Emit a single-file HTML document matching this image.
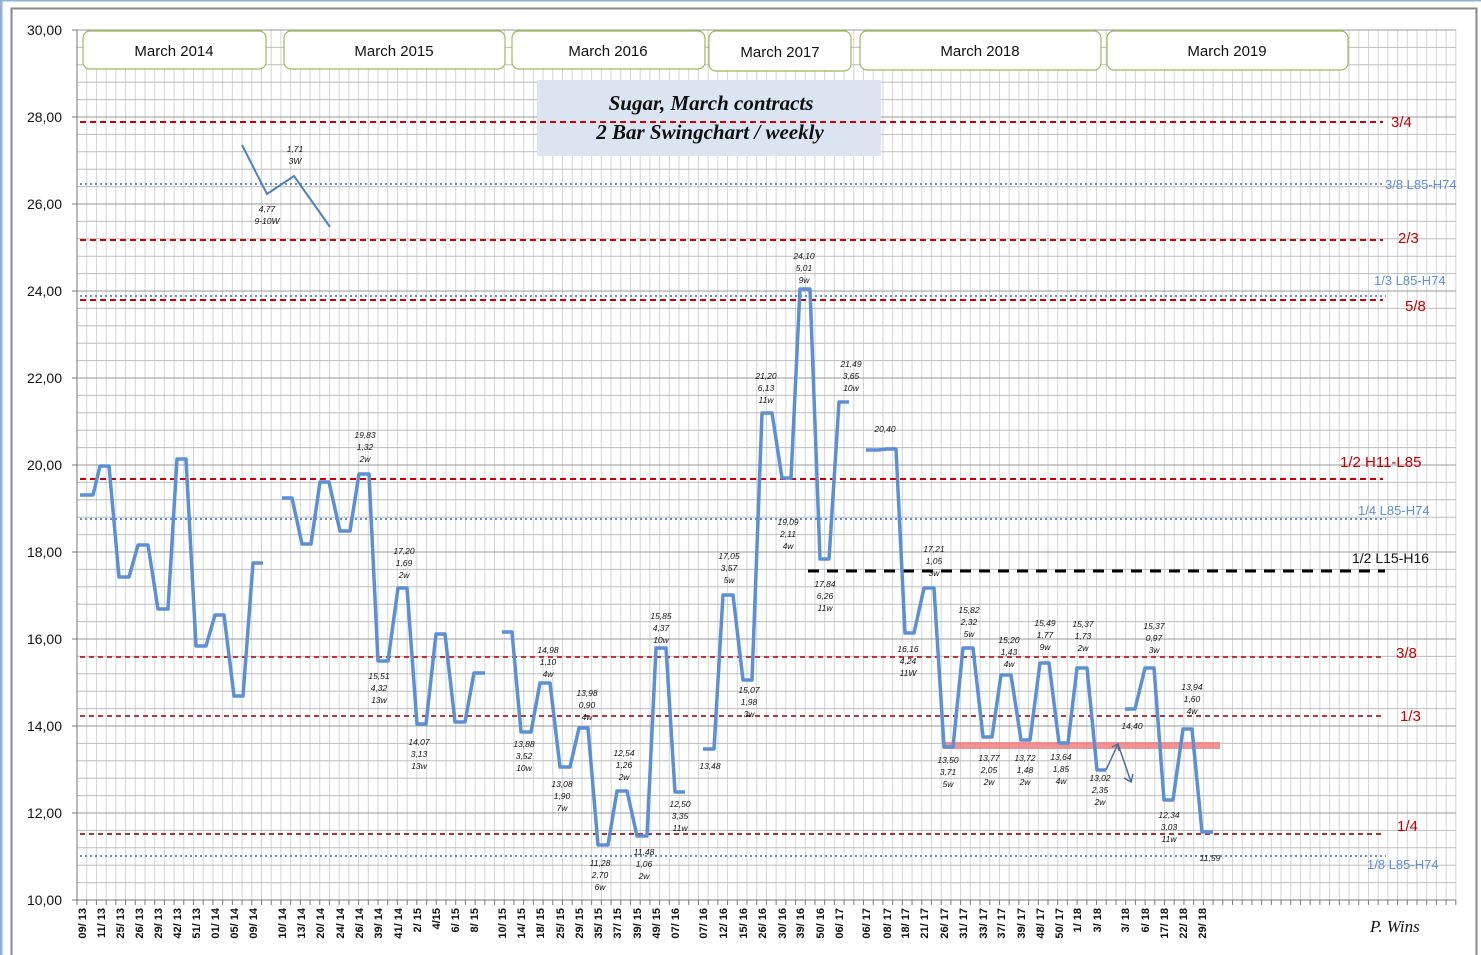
<!DOCTYPE html>
<html><head><meta charset="utf-8"><style>
html,body{margin:0;padding:0;background:#fff;width:1481px;height:955px;overflow:hidden}
svg{display:block}
.dl{font:italic 8.5px "Liberation Sans",sans-serif;fill:#111;text-anchor:middle}
.yl{font:14px "Liberation Sans",sans-serif;fill:#111;text-anchor:end}
.xl{font:bold 11px "Liberation Sans",sans-serif;fill:#111;text-anchor:end}
.mo{font:15px "Liberation Sans",sans-serif;fill:#111;text-anchor:middle}
.rl{font:15px "Liberation Sans",sans-serif;fill:#c00000}
.bl{font:13px "Liberation Sans",sans-serif;fill:#5b8fd6}
</style></head><body>
<svg id="s" width="1481" height="955" viewBox="0 0 1481 955" xmlns="http://www.w3.org/2000/svg">
<rect x="0" y="0" width="1481" height="955" fill="#fff"/>
<line x1="0" y1="0.5" x2="1481" y2="0.5" stroke="#8fb0d8" stroke-width="2"/>
<line x1="1" y1="0" x2="1" y2="955" stroke="#8fb0d8" stroke-width="3"/>
<rect x="11.5" y="8.5" width="1465" height="950" fill="#fff" stroke="#8a8a8a" stroke-width="2"/>
<g id="grid"></g>
<!-- axes -->
<line x1="77" y1="30" x2="77" y2="900" stroke="#777"/>
<line x1="77" y1="900" x2="1456" y2="900" stroke="#777"/>
<g id="ticks"></g>
<!-- y labels -->
<g class="yl">
<text x="62" y="35">30,00</text><text x="62" y="122">28,00</text><text x="62" y="209">26,00</text>
<text x="62" y="296">24,00</text><text x="62" y="383">22,00</text><text x="62" y="470">20,00</text>
<text x="62" y="557">18,00</text><text x="62" y="644">16,00</text><text x="62" y="731">14,00</text>
<text x="62" y="818">12,00</text><text x="62" y="905">10,00</text>
</g>
<!-- month boxes -->
<g fill="#fff" stroke="#9bbb59" stroke-width="1.2">
<rect x="83" y="31" width="183" height="38" rx="7"/>
<rect x="284" y="31" width="221" height="38" rx="7"/>
<rect x="512" y="31" width="193" height="38" rx="7"/>
<rect x="709" y="31" width="142" height="40" rx="7"/>
<rect x="860" y="31" width="241" height="39" rx="7"/>
<rect x="1107" y="31" width="241" height="39" rx="7"/>
</g>
<g class="mo">
<text x="174" y="56">March 2014</text><text x="394" y="56">March 2015</text>
<text x="608" y="56">March 2016</text><text x="780" y="57">March 2017</text>
<text x="980" y="56">March 2018</text><text x="1227" y="56">March 2019</text>
</g>
<!-- title -->
<rect x="537" y="80" width="344" height="76" fill="#dbe5f1"/>
<g style="font:bold italic 21px 'Liberation Serif',serif;fill:#111;text-anchor:middle">
<text x="711" y="110">Sugar, March contracts</text>
<text x="710" y="139">2 Bar Swingchart / weekly</text>
</g>
<!-- ref lines -->
<g fill="none" stroke-width="2">
<line x1="80" y1="122" x2="1383" y2="122" stroke="#cc0000" stroke-dasharray="6,4"/>
<line x1="80" y1="184" x2="1383" y2="184" stroke="#5b8fd6" stroke-dasharray="2,3"/>
<line x1="80" y1="240" x2="1383" y2="240" stroke="#cc0000" stroke-dasharray="6,4"/>
<line x1="80" y1="296" x2="1386" y2="296" stroke="#5b8fd6" stroke-dasharray="2,3"/>
<line x1="80" y1="300" x2="1383" y2="300" stroke="#cc0000" stroke-dasharray="6,4"/>
<line x1="80" y1="479" x2="1383" y2="479" stroke="#cc0000" stroke-dasharray="6,4"/>
<line x1="80" y1="519" x2="1386" y2="519" stroke="#5b8fd6" stroke-dasharray="2,3"/>
<line x1="808" y1="571" x2="1385" y2="571" stroke="#000" stroke-width="3" stroke-dasharray="11,8"/>
<line x1="80" y1="657" x2="1383" y2="657" stroke="#b23a3a" stroke-dasharray="5,4"/>
<line x1="80" y1="716" x2="1383" y2="716" stroke="#b23a3a" stroke-dasharray="5,4"/>
<line x1="80" y1="834" x2="1383" y2="834" stroke="#a83232" stroke-dasharray="5,4"/>
<line x1="80" y1="856" x2="1386" y2="856" stroke="#5b8fd6" stroke-dasharray="2,3"/>
</g>
<text class="rl" x="1391" y="127">3/4</text>
<text class="bl" x="1385" y="189">3/8 L85-H74</text>
<text class="rl" x="1398" y="243">2/3</text>
<text class="bl" x="1374" y="285">1/3 L85-H74</text>
<text class="rl" x="1405" y="311">5/8</text>
<text class="rl" x="1340" y="467">1/2 H11-L85</text>
<text class="bl" x="1358" y="515">1/4 L85-H74</text>
<text x="1352" y="563" style="font:14px 'Liberation Sans',sans-serif;fill:#111">1/2 L15-H16</text>
<text class="rl" x="1396" y="658">3/8</text>
<text class="rl" x="1400" y="721">1/3</text>
<text class="rl" x="1397" y="831">1/4</text>
<text class="bl" x="1367" y="869">1/8 L85-H74</text>
<!-- red bar -->
<rect x="943" y="742" width="277" height="7" fill="#f08080" opacity="0.85"/>
<!-- data -->
<g fill="none" stroke="#5b8fd6" stroke-width="3.5" stroke-linejoin="round">
<polyline points="80,495 93,495 100,466 109,466 119,577 129,577 138,545 148,545 158,609 168,609 177,459 186,459 196,646 206,646 215,615 224,615 234,696 243,696 253,563 263,563"/>
<polyline points="282,498 292,498 302,544 311,544 320,482 329,482 340,531 350,531 359,474 369,474 378,661 388,661 398,588 407,588 417,724 426,724 436,634 445,634 455,722 465,722 474,673 485,673"/>
<polyline points="502,632 512,632 521,732 531,732 540,683 550,683 560,767 570,767 579,728 588,728 598,845 608,845 617,791 627,791 637,836 647,836 656,648 666,648 675,792 685,792"/>
<polyline points="703,749 714,749 723,595 733,595 743,680 752,680 762,413 772,413 782,478 791,478 800,289 810,289 820,559 829,559 839,402 849,402"/>
<polyline points="866,450 878,450 887,449 896,449 905,633 914,633 924,588 934,588 944,747 953,747 963,648 973,648 983,737 992,737 1001,675 1011,675 1021,740 1030,740 1040,663 1049,663 1059,743 1068,743 1077,668 1087,668 1097,770 1106,770"/>
<polyline points="1125,709 1135,709 1145,668 1154,668 1164,800 1173,800 1183,729 1192,729 1202,832 1213,832"/>
</g>
<polyline points="242,145 267,194 294,176 330,227" fill="none" stroke="#4f81bd" stroke-width="2"/>
<g fill="none" stroke="#4a6fa5" stroke-width="1.5">
<polyline points="1106,770 1118,744 1131,782"/>
<polyline points="1112,747 1118,744 1119,751"/>
<polyline points="1124,778 1131,782 1133,774"/>
</g>
<!-- data labels -->
<g class="dl" id="dls"></g>
<text x="1370" y="932" style="font:italic 17px 'Liberation Serif',serif;fill:#111">P. Wins</text>
<g id="xls"></g>
</svg>
<script>
var NS="http://www.w3.org/2000/svg",g=document.getElementById('grid'),t=document.getElementById('ticks');
function el(p,n,a,txt){var e=document.createElementNS(NS,n);for(var k in a)e.setAttribute(k,a[k]);if(txt)e.textContent=txt;p.appendChild(e);return e;}
for(var x=77;x<=1456;x+=9.71){el(g,'line',{x1:x,y1:30,x2:x,y2:900,stroke:'#d4d4d4','stroke-width':1});el(t,'line',{x1:x,y1:900,x2:x,y2:905,stroke:'#777'});}
for(var i=0;i<=50;i++){var y=30+i*17.4;el(g,'line',{x1:77,y1:y,x2:1456,y2:y,stroke:(i%5==0)?'#999':'#bdbdbd','stroke-width':1});}
for(var i=0;i<=10;i++){var y=30+i*87;el(t,'line',{x1:72,y1:y,x2:77,y2:y,stroke:'#777'});}
var L=[["1,71|3W",295,152],["4,77|9-10W",267,212],["19,83|1,32|2w",365,438],["15,51|4,32|13w",379,679],["17,20|1,69|2w",404,554],["14,07|3,13|13w",419,745],["14,98|1,10|4w",548,653],["13,88|3,52|10w",524,747],["13,98|0,90|4w",587,696],["13,08|1,90|7w",562,787],["12,54|1,26|2w",624,756],["11,28|2,70|6w",600,866],["15,85|4,37|10w",661,619],["11,48|1,06|2w",644,855],["12,50|3,35|11w",680,807],["13,48",710,769],["17,05|3,57|5w",729,559],["15,07|1,98|3w",749,693],["21,20|6,13|11w",766,379],["19,09|2,11|4w",788,525],["24,10|5,01|9w",804,259],["17,84|6,26|11w",825,587],["21,49|3,65|10w",851,367],["20,40",885,432],["17,21|1,05|3w",934,552],["16,16|4,24|11W",908,652],["15,82|2,32|5w",969,613],["13,50|3,71|5w",948,763],["15,20|1,43|4w",1009,643],["13,77|2,05|2w",989,761],["15,49|1,77|9w",1045,626],["13,72|1,48|2w",1025,761],["15,37|1,73|2w",1083,627],["13,64|1,85|4w",1061,760],["13,02|2,35|2w",1100,781],["14,40",1132,729],["15,37|0,97|3w",1154,629],["13,94|1,60|4w",1192,690],["12,34|3,03|11w",1169,818],["11,59",1210,861]];
var d=document.getElementById('dls');
L.forEach(function(a){a[0].split('|').forEach(function(s,j){el(d,'text',{x:a[1],y:a[2]+j*12},s);});});
var X=[["09/ 13",82],["11/ 13",101],["25/ 13",120],["26/ 13",139],["29/ 13",158],["42/ 13",177],["51/ 13",196],["01/ 14",215],["05/ 14",234],["09/ 14",253],["10/ 14",282],["13/ 14",301],["20/ 14",320],["24/ 14",340],["26/ 14",359],["39/ 14",378],["41/ 14",398],["2/ 15",417],["4/15",436],["6/ 15",455],["8/ 15",474],["10/ 15",502],["14/ 15",521],["18/ 15",540],["25/ 15",560],["29/ 15",579],["35/ 15",598],["37/ 15",617],["39/ 15",637],["49/ 15",656],["07/ 16",675],["07/ 16",703],["12/ 16",723],["15/ 16",743],["26/ 16",762],["30/ 16",782],["39/ 16",800],["50/ 16",820],["06/ 17",839],["06/ 17",866],["08/ 17",887],["18/ 17",905],["21/ 17",924],["26/ 17",944],["31/ 17",963],["33/ 17",983],["37/ 17",1001],["39/ 17",1021],["48/ 17",1040],["50/ 17",1059],["1/ 18",1077],["3/ 18",1097],["3/ 18",1125],["6/ 18",1145],["17/ 18",1164],["22/ 18",1183],["29/ 18",1202]];
var xg=document.getElementById('xls');
X.forEach(function(a){el(xg,'text',{'class':'xl',transform:'translate('+(a[1]+4)+',908) rotate(-90)'},a[0]);});
</script>
</body></html>
